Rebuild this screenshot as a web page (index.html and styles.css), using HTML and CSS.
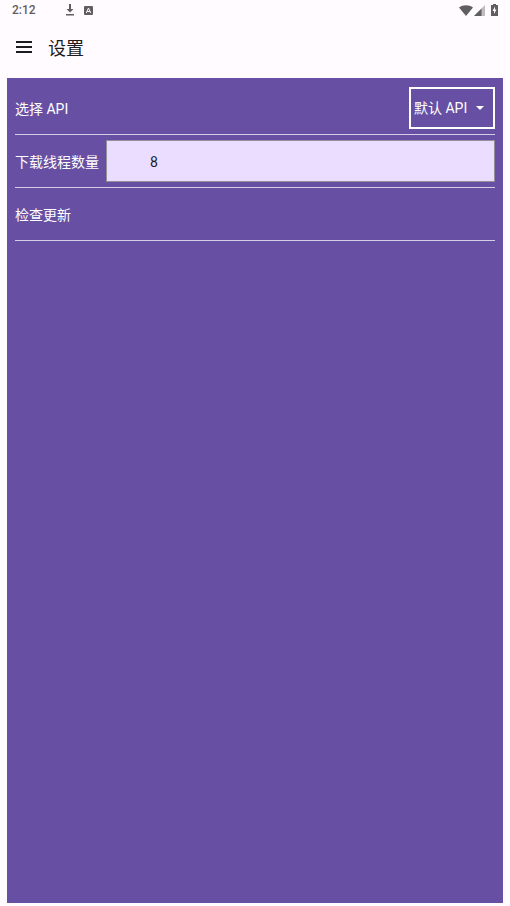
FILE: index.html
```
<!DOCTYPE html>
<html lang="zh-CN">
  <head>
    <meta charset="utf-8">
    <meta name="viewport" content="width=device-width, initial-scale=1">
    <title>设置</title>
    <link rel="stylesheet" href="styles.css">
  </head>
  <body>
    <div class="status-bar">
      <span class="clock">2:12</span>
      <svg class="download-icon" width="10" height="12" viewBox="0 0 10 12">
        <path d="M4 0h2v5h2.500L5 8.500 1.500 5H4zM1 10h8v1.500H1z" />
      </svg>
      <svg width="9" height="9" viewBox="0 0 9 9">
        <rect width="9" height="9" rx="1" />
        <path d="M2.300 7 4.500 2 6.700 7M3.200 5.500h2.600" fill="none" stroke="#fffbfe" />
      </svg>
      <div class="status-right">
        <svg width="14" height="11" viewBox="0 0 14 11">
          <path d="M0 2.500C4-.6 10-.6 14 2.500L7 11z" />
        </svg>
        <svg width="11" height="11" viewBox="0 0 11 11">
          <path d="M0 11 11 0v11z" opacity="0.4" />
          <path d="M0 11 7.500 3.500V11z" />
        </svg>
        <svg class="battery-icon" width="7" height="12" viewBox="0 0 7 12">
          <path d="M2 0h3v1h2v11H0V1h2z" />
          <path d="M4 2.500 1.500 7H3v3l2.500-4.500H4z" fill="#fffbfe" />
        </svg>
      </div>
    </div>

    <header class="app-bar">
      <button type="button" class="menu-button" aria-label="菜单">
        <svg width="16" height="12" viewBox="0 0 16 12">
          <path d="M0 1h16M0 6h16M0 11h16" stroke="#1c1b1f" stroke-width="2" />
        </svg>
      </button>
      <h1>设置</h1>
    </header>

    <main class="settings">
      <div class="row">
        <label for="api">选择 API</label>
        <div class="select-box">
          <select id="api">
            <option>默认 API</option>
          </select>
          <svg class="arrow" width="8" height="4" viewBox="0 0 8 4">
            <path d="M0 0h8L4 4z" fill="#fff" />
          </svg>
        </div>
      </div>
      <div class="row">
        <label for="threads">下载线程数量</label>
        <input type="text" inputmode="numeric" id="threads" class="threads" value="8">
      </div>
      <div class="row">
        <button type="button" class="update-button">检查更新</button>
      </div>
    </main>
  </body>
</html>
```

FILE: styles.css
```
* {
  box-sizing: border-box;
}

body {
  display: flex;
  flex-direction: column;
  min-height: 100vh;
  margin: 0;
  padding: 0 7px 3px;
  background-color: #fffbfe;
  color: #1c1b1f;
  font-family: Roboto, "Noto Sans CJK SC", sans-serif;
  font-size: 14px;
}

svg {
  display: block;
}

button,
input,
select {
  font: inherit;
}

.status-bar {
  display: flex;
  align-items: center;
  height: 20px;
  padding: 0 5px;
  color: #5f5e61;
  fill: #5f5e61;
  font-size: 12px;
}

.clock {
  width: 53px;
  font-weight: 500;
}

.download-icon {
  margin-right: 9px;
}

.status-right {
  display: flex;
  align-items: center;
  gap: 1px;
  margin-left: auto;
}

.battery-icon {
  margin-left: 5px;
}

.app-bar {
  display: flex;
  align-items: center;
  gap: 7px;
  height: 58px;
  padding-bottom: 4px;
}

.menu-button {
  padding: 9px;
  border: none;
  background: none;
}

h1 {
  margin: 0;
  font-size: 18px;
  font-weight: 400;
}

.settings {
  flex: 1;
  padding: 4px 8px;
  background-color: #6750a4;
  color: #fff;
}

.row {
  display: flex;
  align-items: center;
  justify-content: space-between;
  gap: 7px;
  height: 53px;
  border-bottom: 1px solid #d6cde9;
}

.select-box {
  display: grid;
  align-items: center;
  width: 86px;
  height: 42px;
  border: 2px solid #fff;
}

.select-box select {
  grid-area: 1 / 1;
  height: 100%;
  padding: 0 3px;
  border: none;
  background: none;
  color: #fff;
  appearance: none;
}

.arrow {
  grid-area: 1 / 1;
  justify-self: end;
  margin-right: 9px;
  pointer-events: none;
}

.threads {
  flex: 1;
  min-width: 0;
  height: 42px;
  padding: 2px 43px 0;
  border: 1px solid #938f99;
  border-radius: 0;
  background-color: #eaddff;
  color: #1c1b1f;
}

.update-button {
  padding: 0;
  border: none;
  background: none;
  color: #fff;
}
```
